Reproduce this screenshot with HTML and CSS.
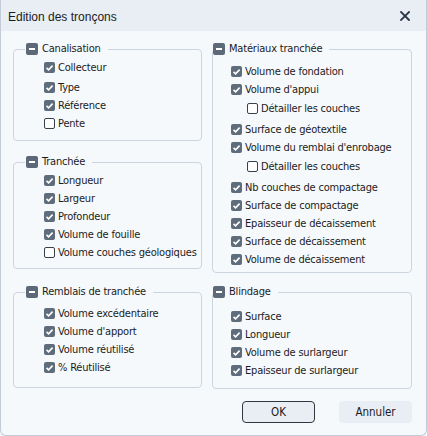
FILE: index.html
```html
<!DOCTYPE html>
<html lang="fr">
<head>
  <meta charset="UTF-8" />
  <title>Edition des tronçons</title>
  <link rel="stylesheet" href="styles.css">
</head>
<body>
  <div class="window">
    <div class="titlebar">
      <span class="title">Edition des tronçons</span>
      <span class="close">
        <svg width="10" height="10" viewBox="0 0 10 10"><path d="M1 1L9 9M9 1L1 9" stroke="#2b3645" stroke-width="1.8" stroke-linecap="square"/></svg>
      </span>
    </div>

    <div class="content">
      <div class="groups">
        <div class="col">
          <fieldset class="group left g-canal">
            <legend><span class="minus"></span>Canalisation</legend>
            <label class="row first"><span class="box on"></span>Collecteur</label>
            <label class="row"><span class="box on"></span>Type</label>
            <label class="row"><span class="box on"></span>Référence</label>
            <label class="row"><span class="box"></span>Pente</label>
          </fieldset>

          <fieldset class="group left g-tranchee">
            <legend><span class="minus"></span>Tranchée</legend>
            <label class="row"><span class="box on"></span>Longueur</label>
            <label class="row"><span class="box on"></span>Largeur</label>
            <label class="row"><span class="box on"></span>Profondeur</label>
            <label class="row"><span class="box on"></span>Volume de fouille</label>
            <label class="row"><span class="box"></span>Volume couches géologiques</label>
          </fieldset>
        </div>

        <fieldset class="group right g-mat">
          <legend><span class="minus"></span>Matériaux tranchée</legend>
          <label class="row"><span class="box on"></span>Volume de fondation</label>
          <label class="row"><span class="box on"></span>Volume d'appui</label>
          <label class="row sub"><span class="box"></span>Détailler les couches</label>
          <label class="row"><span class="box on"></span>Surface de géotextile</label>
          <label class="row"><span class="box on"></span>Volume du remblai d'enrobage</label>
          <label class="row sub"><span class="box"></span>Détailler les couches</label>
          <label class="row"><span class="box on"></span>Nb couches de compactage</label>
          <label class="row"><span class="box on"></span>Surface de compactage</label>
          <label class="row"><span class="box on"></span>Epaisseur de décaissement</label>
          <label class="row"><span class="box on"></span>Surface de décaissement</label>
          <label class="row"><span class="box on"></span>Volume de décaissement</label>
        </fieldset>

        <fieldset class="group left g-remblais">
          <legend><span class="minus"></span>Remblais de tranchée</legend>
          <label class="row"><span class="box on"></span>Volume excédentaire</label>
          <label class="row"><span class="box on"></span>Volume d'apport</label>
          <label class="row"><span class="box on"></span>Volume réutilisé</label>
          <label class="row"><span class="box on"></span>% Réutilisé</label>
        </fieldset>

        <fieldset class="group right g-blindage">
          <legend><span class="minus"></span>Blindage</legend>
          <label class="row"><span class="box on"></span>Surface</label>
          <label class="row"><span class="box on"></span>Longueur</label>
          <label class="row"><span class="box on"></span>Volume de surlargeur</label>
          <label class="row"><span class="box on"></span>Epaisseur de surlargeur</label>
        </fieldset>
      </div>

      <div class="actions">
        <button class="btn default">OK</button>
        <button class="btn">Annuler</button>
      </div>
    </div>
  </div>
</body>
</html>
```

FILE: styles.css
```css
body {
  margin: 0;
  background: #f5f8fc;
  font-family: "DejaVu Sans Condensed", "Liberation Sans", sans-serif;
  font-size: 11px;
  letter-spacing: -0.2px;
  color: #1b1b1b;
}

.window {
  width: 425px;
  height: 435px;
  border: 1px solid #c3ccd6;
  border-top: none;
  border-radius: 0 0 6px 6px;
  background: #f6f9fc;
  overflow: hidden;
}

.titlebar {
  height: 31px;
  background: #e9eef4;
  display: flex;
  align-items: center;
  justify-content: space-between;
  padding: 0 16px 0 7px;
}

.title {
  font-family: "Liberation Sans", sans-serif;
  font-size: 12px;
  letter-spacing: 0;
  margin-top: 2px;
}

.close {
  display: flex;
  margin-top: 1px;
}

.content {
  padding: 10px 0 0 12px;
}

.groups {
  display: grid;
  grid-template-columns: 189px 200px;
  column-gap: 10px;
  row-gap: 11px;
  align-items: start;
}

.col {
  display: flex;
  flex-direction: column;
  gap: 13px;
}

.group {
  margin: 0;
  border: 1px solid #cbd4df;
  border-radius: 4px;
  padding: 0;
  min-width: 0;
}

.group legend {
  display: flex;
  align-items: center;
  gap: 4px;
  height: 16px;
  line-height: 16px;
  padding: 0 7px 0 1px;
}

.group.left legend {
  margin-left: 11px;
}

.group.right legend {
  margin-left: 0;
  padding-left: 0;
}

.minus {
  width: 12px;
  height: 12px;
  border-radius: 2px;
  background: #5d6978;
  position: relative;
}

.minus::after {
  content: "";
  position: absolute;
  left: 3px;
  top: 5px;
  width: 6px;
  height: 2px;
  background: #fff;
}

.row {
  display: flex;
  align-items: center;
  gap: 3px;
  height: 18px;
  white-space: nowrap;
}

.group.left .row {
  padding-left: 30px;
}

.group.right .row {
  padding-left: 18px;
}

.group.right .row.sub {
  padding-left: 34px;
  margin: 1px 0 3px;
}

.row.first {
  margin-bottom: 2px;
}

.box {
  width: 11px;
  height: 11px;
  box-sizing: border-box;
  border: 1px solid #38424e;
  border-radius: 2px;
  background: #fff;
  flex: none;
}

.box.on {
  border: none;
  background: #5f6c7b url("data:image/svg+xml,%3Csvg xmlns='http://www.w3.org/2000/svg' width='11' height='11'%3E%3Cpath d='M2.5 5.8L4.6 7.8L8.6 3.6' fill='none' stroke='white' stroke-width='1.6'/%3E%3C/svg%3E") no-repeat center;
}

.g-canal { padding: 1px 0 8px; }
.g-tranchee { padding: 1px 0 7px; }
.g-mat { padding: 5px 0 4px; }
.g-remblais { padding: 4px 0 11px; }
.g-blindage { padding: 7px 0 9px; }

.actions {
  display: flex;
  justify-content: flex-end;
  gap: 24px;
  margin-top: 12px;
  padding-right: 14px;
}

.btn {
  width: 73px;
  height: 22px;
  font-family: inherit;
  font-size: 11.5px;
  color: #1b1b1b;
  background: #e9eef4;
  border: 1px solid transparent;
  border-radius: 4px;
  padding: 0;
}

.btn.default {
  border-color: #2f3944;
}
```
